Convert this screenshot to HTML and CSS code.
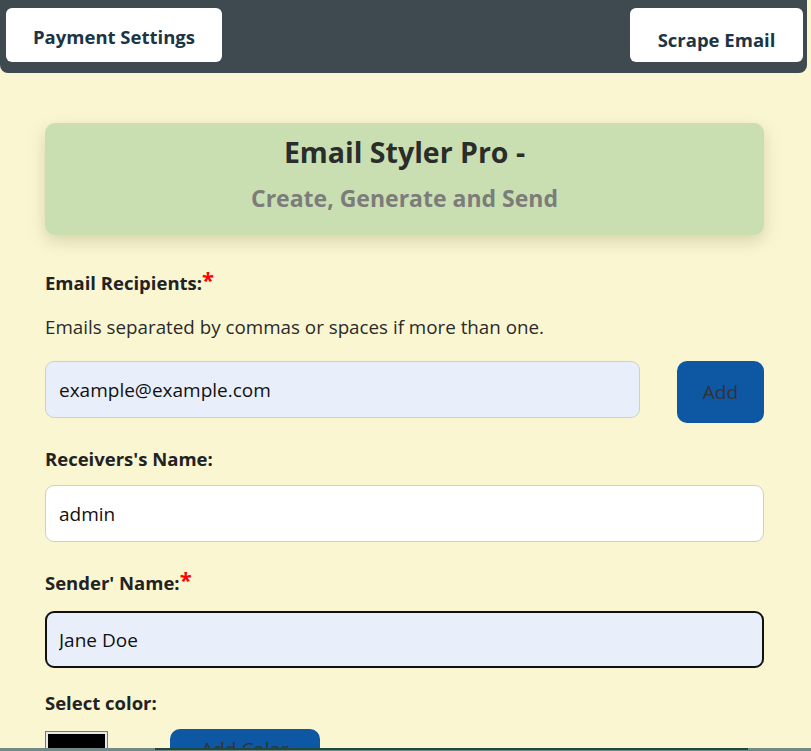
FILE: index.html
```html
<!DOCTYPE html>
<html>
<head>
<meta charset="utf-8">
<link rel="stylesheet" href="styles.css">
</head>
<body>
<header class="topbar">
  <button class="top-btn top-btn-left">Payment Settings</button>
  <button class="top-btn top-btn-right">Scrape Email</button>
</header>
<main class="content">
  <section class="hero">
    <h1 class="hero-title">Email Styler Pro -</h1>
    <h2 class="hero-sub">Create, Generate and Send</h2>
  </section>
  <div class="field field-recipients">
    <label class="label">Email Recipients:<span class="req">*</span></label>
    <p class="hint">Emails separated by commas or spaces if more than one.</p>
    <div class="row">
      <input class="input input-blue" value="example@example.com">
      <button class="add-btn">Add</button>
    </div>
  </div>
  <div class="field field-receiver">
    <label class="label">Receivers's Name:</label>
    <input class="input input-white" value="admin">
  </div>
  <div class="field field-sender">
    <label class="label">Sender' Name:<span class="req">*</span></label>
    <input class="input input-blue input-focus" value="Jane Doe">
  </div>
  <div class="field field-color">
    <label class="label">Select color:</label>
    <div class="color-row">
      <span class="swatch"></span>
      <button class="color-btn">Add Color</button>
    </div>
  </div>
</main>
<div class="bottom-line"><span class="bottom-green"></span></div>
</body>
</html>
```
FILE: styles.css
```css
html, body {
  margin: 0;
  padding: 0;
  height: 751px;
  overflow: hidden;
}
body {
  background: #faf6d2;
  font-family: "Open Sans", "Noto Sans", sans-serif;
  color: #222;
  position: relative;
}
.topbar {
  width: 807px;
  box-sizing: border-box;
  background: #3e4a50;
  border-radius: 0 0 8px 8px;
  padding: 8px 4px 10px 6px;
  display: flex;
  justify-content: space-between;
  align-items: flex-start;
  height: 73px;
}
.top-btn {
  background: #fff;
  border: none;
  border-radius: 6px;
  font-family: inherit;
  font-weight: 700;
  font-size: 18.5px;
  color: #1c3444;
  padding: 0;
  height: 54px;
}
.top-btn-left {
  width: 216px;
  padding-top: 3px;
}
.top-btn-right {
  width: 173px;
  padding-top: 8px;
}
.content {
  padding: 50px 47px 0 45px;
}
.hero {
  background: #c9dfb2;
  border-radius: 10px;
  box-shadow: 0 6px 16px rgba(150, 150, 100, 0.35);
  height: 112px;
  box-sizing: border-box;
  padding-top: 10px;
  text-align: center;
}
.hero-title {
  margin: 0;
  font-size: 28.5px;
  font-weight: 700;
  color: #2a2d2a;
  line-height: 38px;
}
.hero-sub {
  margin: 12px 0 0;
  font-size: 23px;
  font-weight: 700;
  color: #7c7c7a;
  line-height: 30px;
}
.field {
  display: flex;
  flex-direction: column;
}
.label {
  font-weight: 700;
  font-size: 18.5px;
  color: #222;
  line-height: 24px;
}
.field-recipients .label { margin-top: 36px; }
.field-receiver .label { margin-top: 24px; }
.field-sender .label { margin-top: 29px; }
.field-color .label { margin-top: 23px; }
.req {
  color: #ff0000;
  font-size: 22px;
  vertical-align: 2px;
  line-height: 0;
  font-weight: 700;
}
.hint {
  margin: 20px 0 0;
  font-size: 18.8px;
  line-height: 24px;
  color: #2a2a2a;
}
.row {
  display: flex;
  gap: 37px;
  margin-top: 22px;
  align-items: flex-start;
}
.input {
  box-sizing: border-box;
  height: 57px;
  border: 1px solid #cfcfc8;
  border-radius: 9px;
  font-family: inherit;
  font-size: 19px;
  color: #111;
  padding: 0 13px;
  width: 100%;
  outline: none;
}
.field-receiver .input { margin-top: 14px; }
.field-sender .input { margin-top: 16px; }
.row .input {
  flex: 1;
}
.input-blue { background: #e8effb; }
.input-white { background: #ffffff; }
.input-focus {
  border: 2px solid #111;
  padding: 0 12px;
}
.add-btn {
  width: 87px;
  height: 62px;
  flex: none;
  background: #0d57a3;
  border: none;
  border-radius: 10px;
  color: #333;
  font-family: inherit;
  font-size: 19px;
  padding: 0;
}
.color-row {
  display: flex;
  align-items: flex-start;
  gap: 62px;
  margin-top: 14px;
}
.swatch {
  width: 63px;
  height: 30px;
  box-sizing: border-box;
  border: 1px solid #777;
  background: #000;
  box-shadow: inset 0 0 0 2px #e8e8e8;
  margin-top: 2px;
  flex: none;
}
.color-btn {
  width: 150px;
  height: 40px;
  background: #0d57a3;
  border: none;
  border-radius: 10px;
  color: #333;
  font-family: inherit;
  font-size: 19px;
  padding: 0;
  flex: none;
}
.bottom-line {
  position: absolute;
  left: 0;
  top: 748px;
  width: 811px;
  height: 3px;
  background: #6f8a88;
}
.bottom-green {
  position: absolute;
  left: 155px;
  top: 0;
  width: 593px;
  height: 2px;
  background: #1d4a3a;
}
```
